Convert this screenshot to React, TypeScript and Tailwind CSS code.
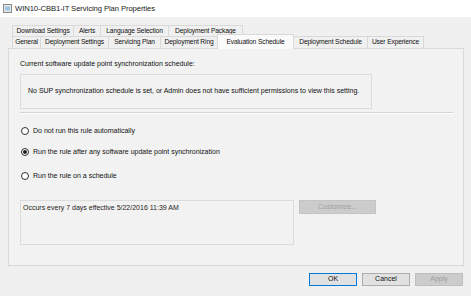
import React from 'react';

const row1 = [
  { label: 'Download Settings', w: 'w-[62px]' },
  { label: 'Alerts', w: 'w-[28px]' },
  { label: 'Language Selection', w: 'w-[69px]' },
  { label: 'Deployment Package', w: 'w-[75px]' },
];

const row2 = [
  { label: 'General', w: 'w-[29px]', active: false },
  { label: 'Deployment Settings', w: 'w-[69px]', active: false },
  { label: 'Servicing Plan', w: 'w-[53px]', active: false },
  { label: 'Deployment Ring', w: 'w-[58px]', active: false },
  { label: 'Evaluation Schedule', w: 'w-[77px]', active: true },
  { label: 'Deployment Schedule', w: 'w-[75px]', active: false },
  { label: 'User Experience', w: 'w-[57px]', active: false },
];

function Radio({ checked, label }: { checked?: boolean; label: string }) {
  return (
    <div className="flex items-center h-[10px]">
      <div className="w-[8px] h-[8px] rounded-full border border-[#333] bg-white flex items-center justify-center">
        {checked && <div className="w-[4px] h-[4px] rounded-full bg-[#222]" />}
      </div>
      <span className="ml-[4px] text-[7px] text-[#111]">{label}</span>
    </div>
  );
}

export default function App() {
  return (
    <div className="w-[471px] h-[296px] bg-[#f0f0f0] overflow-hidden font-['Liberation_Sans',Arial,sans-serif] text-[#111] flex flex-col">
      {/* title bar */}
      <div className="h-[17px] bg-white flex items-center pl-[3px] shrink-0">
        <svg width="9" height="9" viewBox="0 0 9 9">
          <rect x="0.5" y="0.5" width="8" height="8" fill="#e8e8e8" stroke="#8a8a8a" />
          <rect x="2" y="2.5" width="5" height="4" fill="#9fc4e4" />
        </svg>
        <span className="ml-[3px] text-[7.7px] text-[#222] tracking-[-0.1px]">WIN10-CBB1-IT Servicing Plan Properties</span>
      </div>

      {/* tabs */}
      <div className="pl-[12px] mt-[8px] flex flex-col text-[6.7px] tracking-[-0.15px]">
        <div className="flex h-[11px]">
          {row1.map((t) => (
            <div
              key={t.label}
              className={`${t.w} h-[11px] border border-b-0 border-[#d9d9d9] -ml-px first:ml-0 flex items-center justify-center whitespace-nowrap`}
            >
              {t.label}
            </div>
          ))}
        </div>
        <div className="flex items-end h-[12px] relative z-10">
          {row2.map((t) =>
            t.active ? (
              <div
                key={t.label}
                className={`${t.w} h-[15px] -mb-px bg-[#fafafa] border border-b-0 border-[#d9d9d9] -ml-px flex items-center justify-center whitespace-nowrap`}
              >
                {t.label}
              </div>
            ) : (
              <div
                key={t.label}
                className={`${t.w} h-[12px] border border-b-0 border-[#d9d9d9] -ml-px first:ml-0 flex items-center justify-center whitespace-nowrap`}
              >
                {t.label}
              </div>
            )
          )}
        </div>
      </div>

      {/* page */}
      <div className="ml-[8px] w-[456px] h-[218px] border border-[#d9d9d9] bg-[#f2f2f2] px-[11px] pt-[10px] flex flex-col text-[7px]">
        <div className="h-[10px] flex items-center">Current software update point synchronization schedule:</div>
        <div className="mt-[5px] w-[352px] h-[35px] border border-[#dcdcdc] pl-[7px] flex items-center">
          No SUP synchronization schedule is set, or Admin does not have sufficient permissions to view this setting.
        </div>
        <div className="mt-[3px] w-[433px] h-[2px] border-t border-[#d3d3d3] border-b border-b-white" />

        <div className="mt-[12px] ml-[1px] flex flex-col gap-[11px]">
          <Radio label="Do not run this rule automatically" />
          <Radio checked label="Run the rule after any software update point synchronization" />
        </div>
        <div className="mt-[14px] ml-[1px]">
          <Radio label="Run the rule on a schedule" />
        </div>

        <div className="mt-[19px] flex items-start gap-[5px]">
          <div className="w-[274px] h-[45px] border border-[#dcdcdc] pl-[2px] pt-[2px] text-[#222]">
            Occurs every 7 days effective 5/22/2016 11:39 AM
          </div>
          <div className="w-[77px] h-[14px] bg-[#cccccc] border border-[#c4c4c4] flex items-center justify-center text-[#a0a0a0]">
            Customize...
          </div>
        </div>
      </div>

      {/* buttons */}
      <div className="mt-[7px] flex justify-end gap-[5px] pr-[8px] text-[7px]">
        <div className="w-[48px] h-[13px] bg-[#e1e1e1] border border-[#0078d7] flex items-center justify-center">OK</div>
        <div className="w-[48px] h-[13px] bg-[#e1e1e1] border border-[#adadad] flex items-center justify-center">Cancel</div>
        <div className="w-[48px] h-[13px] bg-[#cccccc] border border-[#bfbfbf] flex items-center justify-center text-[#a0a0a0]">Apply</div>
      </div>
    </div>
  );
}
